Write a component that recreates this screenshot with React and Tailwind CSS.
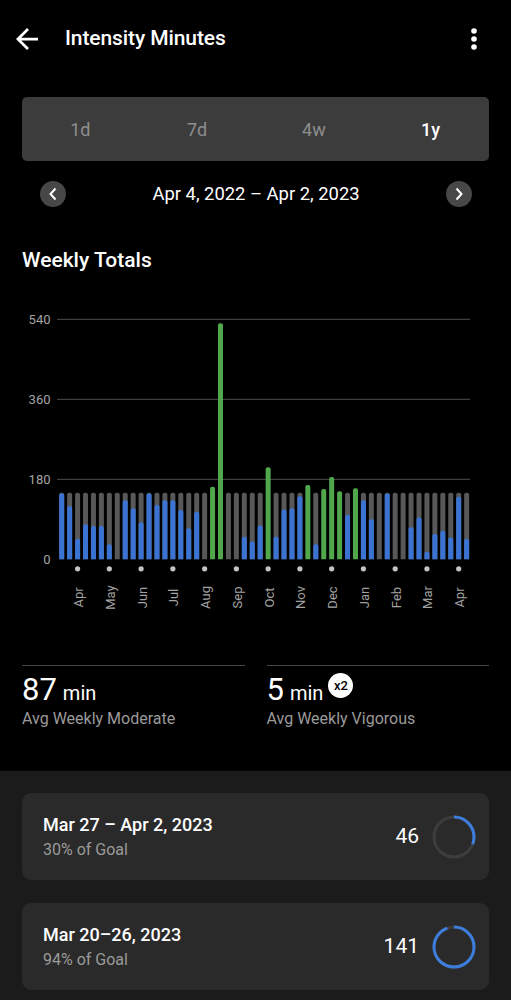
import React from 'react'

// weekly totals, Apr 2022 – Apr 2023 (goal 150)
const WEEKS = [
  148, 120, 46, 79, 75, 75, 34, 0, 133, 115, 83, 148, 122, 133, 133, 111, 70, 107,
  0, 163, 531, 0, 0, 51, 40, 76, 207, 51, 112, 115, 142, 167, 34, 158, 185, 153,
  100, 160, 133, 90, 0, 148, 0, 0, 72, 94, 17, 57, 64, 49, 141, 46,
]
const MONTHS = ['Apr', 'May', 'Jun', 'Jul', 'Aug', 'Sep', 'Oct', 'Nov', 'Dec', 'Jan', 'Feb', 'Mar', 'Apr']
const GOAL = 150
const X0 = 61.7
const STEP = 7.94
const BW = 5
const BASE = 559.3
const K = 240 / 540

const barPath = (cx, top) => {
  const x = cx - BW / 2
  const r = Math.min(2, (BASE - top) / 2)
  return `M${x},${BASE} V${top + r} Q${x},${top} ${x + r},${top} H${x + BW - r} Q${x + BW},${top} ${x + BW},${top + r} V${BASE} Z`
}

function Chart() {
  return (
    <svg width="511" height="320" viewBox="0 300 511 320" className="block" style={{ fontFamily: 'Roboto, sans-serif' }}>
      {[540, 360, 180].map(v => (
        <line key={v} x1="57" x2="470" y1={BASE - v * K} y2={BASE - v * K} stroke="#3f3f3f" strokeWidth="1.2" />
      ))}
      {[540, 360, 180, 0].map(v => (
        <text key={v} x="50.5" y={BASE - v * K} textAnchor="end" dominantBaseline="central" fontSize="13" fill="#a3a3a3">
          {v}
        </text>
      ))}
      {WEEKS.map((v, i) => {
        const cx = X0 + i * STEP
        if (v >= GOAL) return <path key={i} d={barPath(cx, BASE - v * K)} fill="#51a84b" />
        return (
          <g key={i}>
            <path d={barPath(cx, BASE - GOAL * K)} fill="#585858" />
            {v > 0 && <path d={barPath(cx, BASE - v * K)} fill="#3b73d3" />}
          </g>
        )
      })}
      {MONTHS.map((m, j) => {
        const cx = X0 + (2 + j * 4) * STEP
        return (
          <g key={j}>
            <circle cx={cx} cy="568.8" r="2.6" fill="#c4c4c4" />
            <text
              x={cx + 1}
              y="597.5"
              textAnchor="middle"
              dominantBaseline="central"
              fontSize="13"
              fill="#a3a3a3"
              transform={`rotate(-90 ${cx + 1} 597.5)`}
            >
              {m}
            </text>
          </g>
        )
      })}
    </svg>
  )
}

function Ring({ pct }) {
  const r = 20
  const c = 2 * Math.PI * r
  return (
    <svg width="44" height="44" viewBox="0 0 44 44">
      <circle cx="22" cy="22" r={r} fill="none" stroke="#3d3d3d" strokeWidth="3" />
      <circle
        cx="22" cy="22" r={r} fill="none" stroke="#3d7ddb" strokeWidth="3"
        strokeDasharray={`${c * pct} ${c}`}
        transform="rotate(-90 22 22)"
      />
    </svg>
  )
}

function WeekCard({ title, goal, value, pct }) {
  return (
    <div className="flex items-center justify-between rounded-[9px] bg-[#2a2a2a] pl-[21px] pr-[13px] py-[20px]">
      <div>
        <p className="text-[18px] leading-[24px] font-medium text-white">{title}</p>
        <p className="mt-[3px] text-[16px] leading-[20px] text-[#9a9a9a]">{goal}</p>
      </div>
      <div className="flex items-center gap-[13px]">
        <span className="text-[21px] text-white">{value}</span>
        <Ring pct={pct} />
      </div>
    </div>
  )
}

export default function App() {
  return (
    <div className="min-h-screen flex flex-col bg-black text-white" style={{ fontFamily: 'Roboto, "Noto Sans", sans-serif' }}>
      {/* Top bar */}
      <div className="flex items-center h-[78px] pl-[16px] pr-[34px]">
        <svg width="22" height="22" viewBox="4 4 16 16" fill="#fff">
          <path d="M20 11H7.83l5.59-5.59L12 4l-8 8 8 8 1.41-1.41L7.83 13H20v-2z" />
        </svg>
        <h1 className="ml-[27px] text-[21px] font-medium tracking-[-0.1px]">Intensity Minutes</h1>
        <svg className="ml-auto" width="6" height="22" viewBox="0 0 6 22" fill="#fff">
          <circle cx="3" cy="3" r="2.8" />
          <circle cx="3" cy="11" r="2.8" />
          <circle cx="3" cy="19" r="2.8" />
        </svg>
      </div>

      {/* Range tabs */}
      <div className="mx-[22px] mt-[19px] h-[64px] grid grid-cols-4 items-center rounded-[5px] bg-[#3c3c3c] text-[18px]">
        <span className="text-center text-[#8e8e8e]">1d</span>
        <span className="text-center text-[#8e8e8e]">7d</span>
        <span className="text-center text-[#8e8e8e]">4w</span>
        <span className="text-center font-medium text-white">1y</span>
      </div>

      {/* Date navigator */}
      <div className="mt-[20px] h-[26px] flex items-center justify-between pl-[40px] pr-[39px]">
        <button className="w-[26px] h-[26px] rounded-full bg-[#474747] flex items-center justify-center">
          <svg width="10" height="14" viewBox="0 0 10 14" fill="none" stroke="#fff" strokeWidth="2">
            <path d="M7.5 1.5 2.5 7l5 5.5" />
          </svg>
        </button>
        <span className="text-[18.4px] leading-[26px]">Apr 4, 2022 – Apr 2, 2023</span>
        <button className="w-[26px] h-[26px] rounded-full bg-[#474747] flex items-center justify-center">
          <svg width="10" height="14" viewBox="0 0 10 14" fill="none" stroke="#fff" strokeWidth="2">
            <path d="M2.5 1.5 7.5 7l-5 5.5" />
          </svg>
        </button>
      </div>

      <h2 className="mt-[41px] px-[22px] text-[21px] leading-[24px] font-medium">Weekly Totals</h2>

      <div className="mt-[28px]">
        <Chart />
      </div>

      {/* Averages */}
      <div className="mt-[45px] mx-[22px] grid grid-cols-2 gap-[22px]">
        <div className="border-t border-[#444] pt-[8px]">
          <div className="flex items-baseline h-[32px]">
            <span className="text-[31px] leading-[32px]">87</span>
            <span className="ml-[6px] text-[20px]">min</span>
          </div>
          <p className="mt-[3px] text-[16px] leading-[20px] text-[#9a9a9a]">Avg Weekly Moderate</p>
        </div>
        <div className="border-t border-[#444] pt-[8px]">
          <div className="flex items-baseline h-[32px]">
            <span className="text-[31px] leading-[32px]">5</span>
            <span className="ml-[6px] text-[20px]">min</span>
            <span className="self-start -mt-[1px] ml-[5px] w-[25px] h-[25px] rounded-full bg-white text-black text-[13px] font-medium flex items-center justify-center">
              x2
            </span>
          </div>
          <p className="mt-[3px] text-[16px] leading-[20px] text-[#9a9a9a]">Avg Weekly Vigorous</p>
        </div>
      </div>

      {/* Week list */}
      <div className="mt-[42px] flex-1 bg-[#1b1b1b] px-[22px] pt-[22px] pb-[10px] flex flex-col gap-[23px]">
        <WeekCard title="Mar 27 – Apr 2, 2023" goal="30% of Goal" value="46" pct={46 / 150} />
        <WeekCard title="Mar 20–26, 2023" goal="94% of Goal" value="141" pct={141 / 150} />
      </div>
    </div>
  )
}
